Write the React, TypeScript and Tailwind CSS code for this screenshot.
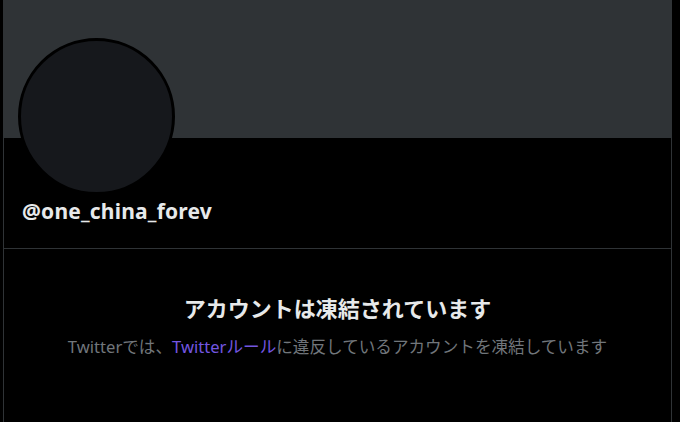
const App = () => {
    return (
        <div
            className="min-h-[422px] w-[680px] bg-black"
            style={{ fontFamily: '"Noto Sans", "Noto Sans CJK JP", sans-serif' }}
        >
            <div className="relative ml-[3px] min-h-[422px] w-[669px] border-x border-[#2f3336]">
                <div className="h-[138px] bg-[#2f3336]" />
                <div className="absolute left-[14px] top-[38px] h-[157px] w-[157px] rounded-full border-[3px] border-black bg-[#16181c]" />
                <div className="h-[111px] border-b border-[#2f3336] px-[18px] pt-[59px]">
                    <div className="text-[21px] font-bold leading-[28px] tracking-[0.2px] text-[#e7e9ea]">
                        @one_china_forev
                    </div>
                </div>
                <div className="flex flex-col items-center pt-[44px]">
                    <h2 className="text-[22px] font-bold leading-[30px] text-[#e7e9ea]">
                        アカウントは凍結されています
                    </h2>
                    <p className="mt-[12px] text-[16.6px] leading-[24px] text-[#71767b]">
                        Twitterでは、
                        <span className="text-[#7356e0]">Twitterルール</span>
                        に違反しているアカウントを凍結しています
                    </p>
                </div>
            </div>
        </div>
    )
}

export default App
